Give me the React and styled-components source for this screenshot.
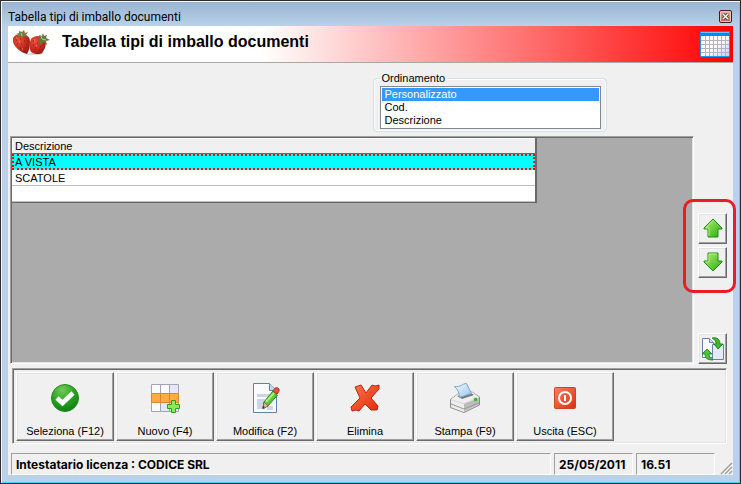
import React, { useState } from 'react';
import styled, { createGlobalStyle } from 'styled-components';

const GlobalStyle = createGlobalStyle`
  * {
    box-sizing: border-box;
  }

  body {
    margin: 0;
    font-family: 'Liberation Sans', Arial, sans-serif;
    font-size: 11px;
    color: #000;
  }
`;

const Window = styled.div`
  display: flex;
  flex-direction: column;
  min-height: 100vh;
  padding: 0 6px 8px;
  background: #b9d1ea;
  border: 1px solid #2d2d30;
  box-shadow: inset 1px 1px 0 #f4f8fc, inset -1px -1px 0 #48d4f0;
`;

const TitleBar = styled.div`
  display: flex;
  align-items: flex-end;
  justify-content: space-between;
  height: 25px;
  margin: 0 -5px;
  padding: 0 7px 2px 6px;
  background: linear-gradient(#99b4d1, #b9d1ea);
  border-top: 1px solid #f4f8fc;
  font-family: Roboto, 'Open Sans', sans-serif;
  font-size: 12px;
  line-height: 14px;
`;

const CloseButton = styled.button`
  display: flex;
  align-items: center;
  justify-content: center;
  width: 13px;
  height: 13px;
  margin-bottom: 1px;
  padding: 0;
  background: linear-gradient(#e8b0a4, #c4604c);
  border: 1px solid #471a22;
  border-radius: 2px;
  box-shadow: inset 0 0 0 1px #f0c4bc;
`;

const Client = styled.main`
  display: flex;
  flex: 1;
  flex-direction: column;
  margin: 0 1px;
  background: #f0f0f0;
`;

const Header = styled.header`
  display: flex;
  align-items: center;
  height: 37px;
  padding: 0 3px 0 4px;
  background: linear-gradient(to right, #fff 35%, #f00);
  border-bottom: 1px solid #a7a7a7;
`;

const PageTitle = styled.h1`
  flex: 1;
  margin: 0 0 4px 12px;
  font-size: 16px;
  line-height: 20px;
`;

const SortRow = styled.div`
  display: flex;
  justify-content: center;
  padding: 9px 0 4px 238px;
`;

const SortGroup = styled.fieldset`
  width: 234px;
  margin: 0;
  padding: 2px 5px 2px 6px;
  border: 1px solid #d5dfe5;
  border-radius: 4px;
  box-shadow: inset 0 0 0 1px #fafcfd;
`;

const SortLegend = styled.legend`
  padding: 0 2px;
  line-height: 12px;
`;

const SortList = styled.select`
  display: block;
  width: 100%;
  height: 43px;
  padding: 1px;
  overflow: hidden;
  background: #fff;
  border: 1px solid #828790;
  border-radius: 0;
  outline: 0;
  font: 11px 'Liberation Sans', Arial, sans-serif;
  color: #000;

  option {
    min-height: 13px;
    height: 13px;
    padding: 0 3px;
    line-height: 13px;
  }

  option:checked {
    background: #3399ff linear-gradient(#3399ff, #3399ff);
    color: #fff;
    -webkit-text-fill-color: #fff;
  }
`;

const sunken = `
  border: 1px solid;
  border-color: #a0a0a0 #fff #fff #a0a0a0;
  box-shadow: inset 1px 1px 0 #696969, inset -1px -1px 0 #e3e3e3;
`;

const raised = `
  background: #f0f0f0;
  border: 1px solid;
  border-color: #fff #696969 #696969 #fff;
  border-radius: 0;
  box-shadow: inset -1px -1px 0 #a0a0a0, inset 1px 1px 0 #e3e3e3;
  color: #000;
`;

const Content = styled.div`
  display: flex;
  flex: 1;
`;

const GridPanel = styled.section`
  ${sunken}
  flex: 1;
  margin-left: 2px;
  padding: 1px;
  background: #ababab;
`;

const DataTable = styled.table`
  width: 525px;
  max-width: 100%;
  border-collapse: separate;
  border-spacing: 0;
  border: solid #696969;
  border-width: 0 2px 1px 0;
  background: #fff;

  th,
  td {
    height: 16px;
    padding: 0 3px;
    border-bottom: 1px solid #c0c0c0;
    font-weight: normal;
    line-height: 14px;
    text-align: left;
  }

  th {
    background: #f0f0f0;
    border-bottom-color: #696969;
    box-shadow: inset 1px 1px 0 #fff;
  }
`;

const Row = styled.tr`
  background: ${props => (props.$selected ? '#00ffff' : '#fff')};

  td {
    outline: ${props => (props.$selected ? '2px dotted #f00' : 'none')};
    outline-offset: -2px;
  }
`;

const SideBar = styled.aside`
  display: flex;
  flex-direction: column;
  align-items: flex-start;
  justify-content: space-between;
  width: 39px;
  padding: 77px 0 0 4px;
`;

const MoveButtons = styled.div`
  position: relative;
  display: grid;
  gap: 3px;
`;

// red frame around the two move buttons, runs over the grid and the border
const Highlight = styled.div`
  position: absolute;
  inset: -14px -9px -15px -15px;
  border: 3px solid #ed1c24;
  border-radius: 10px;
  pointer-events: none;
`;

const SideButton = styled.button`
  ${raised}
  display: flex;
  align-items: center;
  justify-content: center;
  width: 29px;
  height: 31px;
  padding: 0;
`;

const ToolBar = styled.nav`
  ${sunken}
  display: flex;
  gap: 2px;
  margin: 4px 6px 0 4px;
  padding: 3px 3px 2px;
`;

const ToolButton = styled.button`
  ${raised}
  display: flex;
  flex-direction: column;
  align-items: center;
  gap: 9px;
  width: 98px;
  height: 69px;
  padding: 10px 0 0;
  font: 11px 'Liberation Sans', Arial, sans-serif;
  line-height: 14px;
`;

const StatusBar = styled.footer`
  display: flex;
  gap: 3px;
  align-items: flex-end;
  height: 31px;
  padding-left: 3px;
`;

const StatusPanel = styled.div`
  flex: ${props => (props.$wide ? '1' : '0 0 79px')};
  height: 22px;
  padding: 0 4px;
  border: 1px solid;
  border-color: #a0a0a0 #fff #fff #a0a0a0;
  font-family: Inter, 'Liberation Sans', sans-serif;
  font-size: 12px;
  font-weight: bold;
  line-height: 21px;
`;

const Grip = styled.svg`
  margin-left: 2px;
`;

function StrawberryIcon() {
  return (
    <svg width="38" height="28" viewBox="0 0 38 28" aria-hidden="true">
      <defs>
        <radialGradient id="berry" cx=".35" cy=".3" r=".8">
          <stop offset="0" stopColor="#e8503c" />
          <stop offset=".5" stopColor="#cb2e20" />
          <stop offset="1" stopColor="#96150f" />
        </radialGradient>
      </defs>
      <path d="M14 24l6-1 5 1 8-2-5 3H17z" fill="#d8d4d2" />
      <path d="M1 8c2-4 6-4 9-3 5-1 8 2 8 7 0 5-1 9-3 12C9 23 1 16 1 11z" fill="url(#berry)" />
      <path d="M19 9c3-4 11-4 14 0 2 5 0 10-3 14-3 2-8 1-11-1-2-4-2-9 0-13z" fill="url(#berry)" />
      <path d="M4 4l3-1V1l3 1 2-2 1 3 3-1-2 3 2 2-4-1-2 2-1-2-4 1 2-2z" fill="#718044" />
      <path d="M27 5l3 1 1-3 1 3 3-1-1 3 4 2-4 1 1 4-4-3-3 3V11l-3-1 3-2z" fill="#66773b" />
      <path d="M29 6l1 3 4 1M9 3l1 3" stroke="#b9c58b" fill="none" />
      <path
        d="M4 10h1m3-1h1m3 2h1m2 0h1M5 14h1m3 0h1m4 0h1M8 18h1m4-1h1m-2 4h1M21 11h1m-1 4h1m3-2h1m-3 5h1m4-1h1m-2 3h1"
        stroke="#742017"
      />
      <path d="M4 8h1m2 4h1m14-2h1m1 6h1m-15 3h1" stroke="#ec9278" />
    </svg>
  );
}

function CalendarIcon() {
  return (
    <svg width="30" height="26" viewBox="0 0 30 26" aria-hidden="true">
      <defs>
        <linearGradient id="days" x2="1" y2="1">
          <stop offset=".5" stopColor="#fff" />
          <stop offset="1" stopColor="#c8c8f8" />
        </linearGradient>
      </defs>
      <rect x=".5" y="1.5" width="29" height="24" rx="1" fill="url(#days)" stroke="#1597f4" />
      <path d="M0 1q0-1 1-1h28q1 0 1 1v4H0z" fill="#078af0" />
      <path d="M1 1.5h28" stroke="#62c5ff" />
      <path
        d="M1 9.5h28M1 13.5h28M1 17.5h28M1 21.5h28M5.5 5v20M9.5 5v20M13.5 5v20M17.5 5v20M21.5 5v20M25.5 5v20"
        stroke="#b3b3b8"
      />
    </svg>
  );
}

function ArrowIcon({ down }) {
  return (
    <svg width="20" height="21" viewBox="0 0 20 21" aria-hidden="true">
      <defs>
        <linearGradient id="arrow" x2="1" y2="1">
          <stop offset="0" stopColor="#b5f070" />
          <stop offset="1" stopColor="#25ac0d" />
        </linearGradient>
      </defs>
      <path
        d={down ? 'M10 19l9-9V9h-4V1H5v8H1v1z' : 'M10 1l9 9v1h-4v8H5v-8H1v-1z'}
        fill="url(#arrow)"
        stroke="#278820"
        strokeLinejoin="round"
      />
      <path
        d={down ? 'M14 2H6v8H3' : 'M10 2.500L3 10h3v8'}
        fill="none"
        stroke="#c4f58c"
        strokeOpacity=".8"
      />
    </svg>
  );
}

function SwapIcon() {
  return (
    <svg width="24" height="24" viewBox="0 0 24 24" aria-hidden="true">
      <path d="M1.500 1.500h7l4 4v15h-11z" fill="#fff" stroke="#6480ab" />
      <path d="M8.500 1.500v4h4" fill="#d8e4f2" stroke="#6480ab" />
      <path d="M11.500 7.500h11v15h-11z" fill="#e2ebf8" stroke="#6480ab" />
      <path d="M11 1c6-1 8 2 8 6h3l-5 5-4-5h2c0-3-1-4-4-6z" fill="#3cb82a" stroke="#187914" strokeWidth=".8" />
      <path d="M12 23c-6 0-8-2-8-6H1l5-5 5 5H8c0 3 1 4 4 6z" fill="#4ac634" stroke="#187914" strokeWidth=".8" />
    </svg>
  );
}

function CheckIcon() {
  return (
    <svg width="32" height="32" viewBox="0 0 32 32" aria-hidden="true">
      <defs>
        <radialGradient id="ok" cx=".4" cy=".2" r=".9">
          <stop offset="0" stopColor="#70cb58" />
          <stop offset=".5" stopColor="#2ba321" />
          <stop offset="1" stopColor="#087610" />
        </radialGradient>
      </defs>
      <circle cx="16" cy="15" r="13.500" fill="url(#ok)" stroke="#258b20" />
      <path d="M8 15l5.500 5L24 10" fill="none" stroke="#fff" strokeWidth="4.600" />
    </svg>
  );
}

function NewRowIcon() {
  return (
    <svg width="32" height="32" viewBox="0 0 32 32" aria-hidden="true">
      <path d="M2.500 1.500h27v27h-27z" fill="#fafaff" stroke="#a3a3b2" />
      <path d="M20 2h9v8h-9zM11 20h18v8H11z" fill="#e6e6fb" />
      <path d="M11.500 2v26M20.500 2v26M2 10.500h28M2 19.500h28" stroke="#a3a3b2" />
      <path d="M2.500 10.500h27v9h-27z" fill="#fdab43" stroke="#d9882e" />
      <path d="M11.500 11v8M20.500 11v8" stroke="#d9882e" />
      <path
        d="M22.500 17.500h4v4h4v4h-4v4h-4v-4h-4v-4h4z"
        fill="#8ee65a"
        stroke="#319d20"
      />
    </svg>
  );
}

function EditIcon() {
  return (
    <svg width="32" height="32" viewBox="0 0 32 32" aria-hidden="true">
      <path d="M4.500.5h16l7 7v22h-23z" fill="#f9fbff" stroke="#6380a8" />
      <path d="M20.500.5v7h7" fill="#c4d8ed" stroke="#6380a8" />
      <path d="M8 11h15v3H8zM8 16h8v10H8zM18 23h6v4h-6z" fill="#ccd4e9" />
      <path d="M15 19l9-11 4.500 4L19 23l-5 2z" fill="#58ca32" stroke="#31831e" />
      <path d="M17 19l8-9" stroke="#a8f276" strokeWidth="2" />
      <path d="M24 8l2-3q3-1 4 1 1 2-2 5z" fill="#e65343" stroke="#b92d22" />
      <path d="M15 19l4 4-5 3z" fill="#e2bd87" stroke="#69533b" strokeWidth=".7" />
      <path d="M14 23l2 1-2.500 2z" fill="#333" />
    </svg>
  );
}

function DeleteIcon() {
  return (
    <svg width="32" height="32" viewBox="0 0 32 32" aria-hidden="true">
      <defs>
        <linearGradient id="del" x2="1" y2="1">
          <stop offset="0" stopColor="#ff7650" />
          <stop offset="1" stopColor="#e02a08" />
        </linearGradient>
      </defs>
      <path
        d="M6 4l6-2 5 8 6-8 3 1 4-1v4l-8 9 7 8-1 4h-6l-6-6-6 7-3-1-4 1-1-4 9-9z"
        fill="url(#del)"
        stroke="#bd2410"
        strokeLinejoin="round"
      />
    </svg>
  );
}

function PrinterIcon() {
  return (
    <svg width="32" height="32" viewBox="0 0 32 32" aria-hidden="true">
      <defs>
        <linearGradient id="sheet" x2="1" y2="1">
          <stop offset="0" stopColor="#f5faff" />
          <stop offset="1" stopColor="#91c4f2" />
        </linearGradient>
      </defs>
      <path d="M1.500 16.500L9 11l14-2 7.500 5v8L15 29.500l-13.500-5z" fill="#d7d7d7" stroke="#8b8b8b" />
      <path d="M2 16.500L9 11l14-2 7 5-15 6z" fill="#efefef" />
      <path d="M2 17l13 4 15-6v6l-15 7-13-5z" fill="#bcbcbc" />
      <path d="M2 17l13 4v8L2 24z" fill="#ededed" />
      <path d="M8 13l14-3 3 2-12 4z" fill="#777" />
      <path d="M5.500 3.500c6 1 8-3 12-3 2 3 3 7 5 10l-12 4c0-5-2-8-5-11z" fill="url(#sheet)" stroke="#7ea3c9" />
      <path d="M2 21l13 5 15-6" fill="none" stroke="#999" />
      <path d="M25 17l3-1" stroke="#27c315" strokeWidth="3" />
    </svg>
  );
}

function ExitIcon() {
  return (
    <svg width="32" height="32" viewBox="0 0 32 32" aria-hidden="true">
      <defs>
        <linearGradient id="exit" x2="1" y2="1">
          <stop offset="0" stopColor="#fb8060" />
          <stop offset="1" stopColor="#d9300d" />
        </linearGradient>
      </defs>
      <rect x="5.500" y="4.500" width="21" height="21" rx="1" fill="url(#exit)" stroke="#d14222" />
      <circle cx="16" cy="15" r="6" fill="none" stroke="#fff" strokeWidth="2" />
      <path d="M16 12v6" stroke="#fff" strokeWidth="2" />
    </svg>
  );
}

const sortOptions = ['Personalizzato', 'Cod.', 'Descrizione'];
const packages = ['A VISTA', 'SCATOLE', ''];

const actions = [
  { label: 'Seleziona (F12)', Icon: CheckIcon },
  { label: 'Nuovo (F4)', Icon: NewRowIcon },
  { label: 'Modifica (F2)', Icon: EditIcon },
  { label: 'Elimina', Icon: DeleteIcon },
  { label: 'Stampa (F9)', Icon: PrinterIcon },
  { label: 'Uscita (ESC)', Icon: ExitIcon },
];

function App() {
  const [sort, setSort] = useState('Personalizzato');
  const [selected, setSelected] = useState(0);

  return (
    <Window>
      <GlobalStyle />
      <TitleBar>
        <span>Tabella tipi di imballo documenti</span>
        <CloseButton aria-label="Chiudi">
          <svg width="7" height="7" viewBox="0 0 7 7" aria-hidden="true">
            <path d="M1 1l5 5M6 1L1 6" stroke="#333f4f" strokeWidth="3" />
            <path d="M1 1l5 5M6 1L1 6" stroke="#fff" strokeWidth="1.500" />
          </svg>
        </CloseButton>
      </TitleBar>
      <Client>
        <Header>
          <StrawberryIcon />
          <PageTitle>Tabella tipi di imballo documenti</PageTitle>
          <CalendarIcon />
        </Header>
        <SortRow>
          <SortGroup>
            <SortLegend id="sort-label">Ordinamento</SortLegend>
            <SortList
              size={3}
              aria-labelledby="sort-label"
              value={sort}
              onChange={e => setSort(e.target.value)}
            >
              {sortOptions.map(option => (
                <option key={option} value={option}>{option}</option>
              ))}
            </SortList>
          </SortGroup>
        </SortRow>
        <Content>
          <GridPanel>
            <DataTable>
              <thead>
                <tr>
                  <th scope="col">Descrizione</th>
                </tr>
              </thead>
              <tbody>
                {packages.map((name, index) => (
                  <Row
                    key={name}
                    $selected={index === selected}
                    onClick={() => setSelected(index)}
                  >
                    <td>{name}</td>
                  </Row>
                ))}
              </tbody>
            </DataTable>
          </GridPanel>
          <SideBar>
            <MoveButtons>
              <SideButton aria-label="Sposta su"><ArrowIcon /></SideButton>
              <SideButton aria-label="Sposta giù"><ArrowIcon down /></SideButton>
              <Highlight />
            </MoveButtons>
            <SideButton aria-label="Aggiorna"><SwapIcon /></SideButton>
          </SideBar>
        </Content>
        <ToolBar>
          {actions.map(({ label, Icon }) => (
            <ToolButton key={label}>
              <Icon />
              {label}
            </ToolButton>
          ))}
        </ToolBar>
        <StatusBar>
          <StatusPanel $wide>Intestatario licenza : CODICE SRL</StatusPanel>
          <StatusPanel>25/05/2011</StatusPanel>
          <StatusPanel>16.51</StatusPanel>
          <Grip width="13" height="13" viewBox="0 0 13 13" aria-hidden="true">
            <path d="M1 12L12 1M5 12l7-7M9 12l3-3" stroke="#a0a0a0" strokeWidth="1.500" />
            <path d="M2.500 12.500l10-10M6.500 12.500l6-6" stroke="#fff" />
          </Grip>
        </StatusBar>
      </Client>
    </Window>
  );
}

export default App;
